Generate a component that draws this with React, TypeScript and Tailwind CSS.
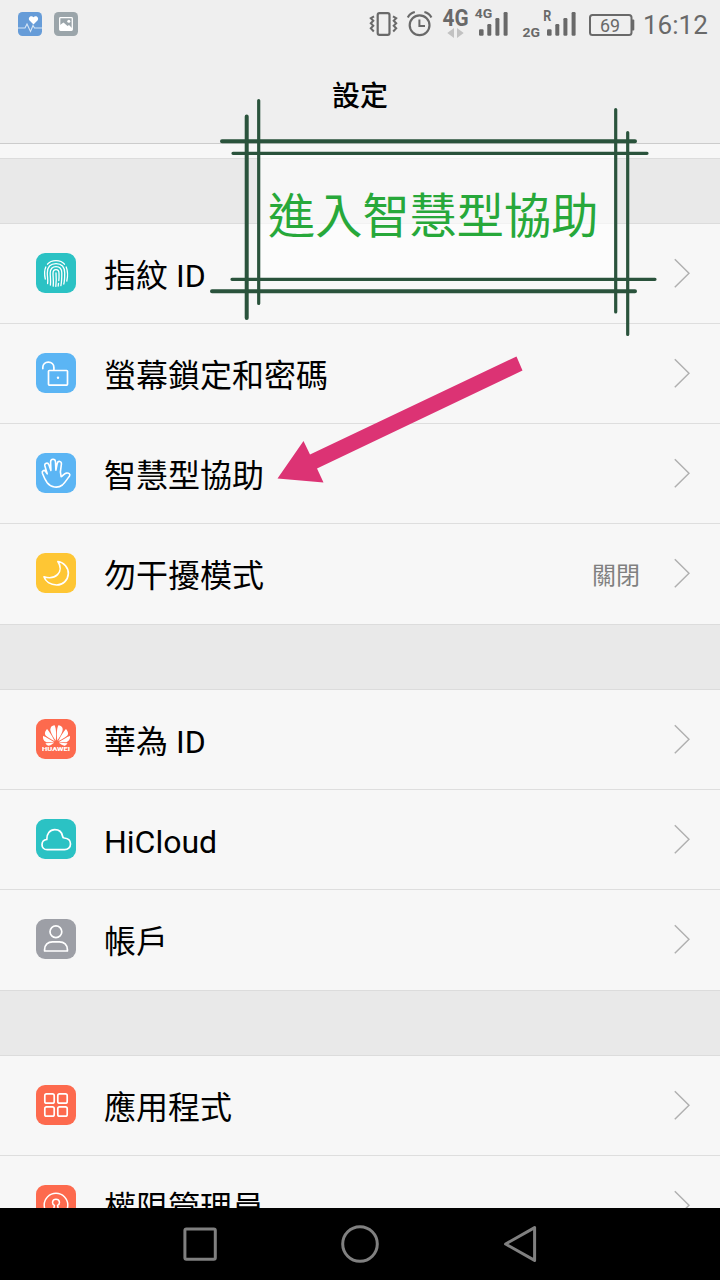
import React from 'react';
import { SiHuawei } from 'react-icons/si';

// --- Row icons (40x40 tiles) ---
const Tile: React.FC<{ className: string; children: React.ReactNode }> = ({ className, children }) => (
  <div className={`relative w-10 h-10 rounded-[9px] shrink-0 overflow-hidden ${className}`}>{children}</div>
);

const Line: React.FC<{ children: React.ReactNode; strokeWidth?: number }> = ({ children, strokeWidth = 1.7 }) => (
  <svg
    width={40}
    height={40}
    viewBox="0 0 40 40"
    fill="none"
    stroke="white"
    strokeWidth={strokeWidth}
    strokeLinecap="round"
    strokeLinejoin="round"
  >
    {children}
  </svg>
);

const FingerprintTile = () => (
  <Tile className="bg-[#2bc2c4]">
    <Line strokeWidth={1.3}>
      <path d="M11.5 11.2C15.2 6.4 24.8 6.4 28.5 11.2" />
      <path d="M9.3 26C8.4 22 8.2 17.5 9.8 14" />
      <path d="M30.2 14C31.8 18 31.7 24 30.8 28" />
      <path d="M11.6 30.5C12.2 27 11.3 24 11.3 20C11.3 13.4 14.8 10.6 20 10.6C25.4 10.6 28.7 14 28.7 20C28.7 25 28.6 28 27.8 31" />
      <path d="M14.4 32C15 28 14.2 24.5 14.2 20C14.2 15.8 16.5 13.6 20 13.6C23.6 13.6 25.8 16 25.8 20C25.8 25 25.7 29 24.9 32.6" />
      <path d="M17.2 33.2C17.8 28.5 17 24.5 17 20.4C17 17.9 18.2 16.6 20 16.6C21.9 16.6 23 17.9 23 20.4C23 23 23.2 25 22.8 27.5" />
      <path d="M20 20C20.3 24 20.5 28.5 19.8 33.4" />
      <path d="M22.5 30.3L22.2 33" />
    </Line>
  </Tile>
);

const LockTile = () => (
  <Tile className="bg-[#5bb5f4]">
    <Line>
      <rect x="12.5" y="17.5" width="19" height="14.6" rx="0.8" />
      <path d="M6.8 15.6V14.5C6.8 11.4 9.2 9.1 12.3 9.1C15.5 9.1 17.9 11.4 17.9 14.5V17.2" />
      <circle cx="22" cy="24.8" r="1.2" fill="white" stroke="none" />
    </Line>
  </Tile>
);

const HandTile = () => (
  <Tile className="bg-[#5bb5f4]">
    <Line strokeWidth={1.6}>
      <path d="M11.2 29.8C9.2 27 7.6 23.4 6.4 20.2C5.6 17.7 8.3 16.5 9.6 18.5L11.2 20.8L8.9 13C8.2 9.9 11.9 9 12.9 11.8L14.9 17.4L14.6 8.9C14.6 5.3 19.3 5.3 19.5 8.8L19.9 17.2L21.3 10.2C22.1 7.3 25.8 8 25.4 11.2L24.4 18.8L25.1 23.6C26.8 23.2 27.8 20.6 30.3 20.1C33 19.7 34.7 21.3 33.4 23.2C31 26 29.3 29.6 26.4 32C22 35.4 14.8 34.6 11.2 29.8Z" />
    </Line>
  </Tile>
);

const MoonTile = () => (
  <Tile className="bg-[#fec634]">
    <Line>
      <path d="M21.9 8.5C28 9.5 32.6 14.6 32.3 20.8C32 27.3 26.8 32.1 20.6 32C14.4 31.9 9.5 28.5 8 23.8C12.8 25.3 18.2 24.9 21.5 21.7C25 18.2 24.7 12.8 21.9 8.5Z" />
    </Line>
  </Tile>
);

const HuaweiTile = () => (
  <Tile className="bg-[#fd6a4e]">
    <div className="flex flex-col items-center pt-[3px] text-white">
      <SiHuawei size={27} />
      <svg width={28} height={6} viewBox="0 0 28 6" className="-mt-[3px]">
        <text x="0" y="5" textLength="28" lengthAdjust="spacingAndGlyphs" className="font-[Roboto] text-[6px] font-black fill-white">
          HUAWEI
        </text>
      </svg>
    </div>
  </Tile>
);

const CloudTile = () => (
  <Tile className="bg-[#2bc2c4]">
    <Line>
      <path d="M11.2 30.7C8 30.7 6 28.5 6 25.7C6 22.7 8 20.8 10.8 20.5C10.4 14.8 13.9 10.6 18.8 10.6C23 10.6 25.8 13.2 26.5 17C26.7 18.3 26.9 18.8 28.3 19C32 19.4 34.5 21.7 34.5 25C34.5 28.4 31.8 30.7 28.6 30.7Z" />
    </Line>
  </Tile>
);

const AccountTile = () => (
  <Tile className="bg-[#9d9fa6]">
    <Line>
      <circle cx="19.9" cy="12.7" r="5.9" />
      <path d="M8.6 32V30.6C8.6 25.8 12 22.8 16.4 22.8H23.4C28 22.8 31.4 25.8 31.4 30.6V32Z" />
    </Line>
  </Tile>
);

const AppsTile = () => (
  <Tile className="bg-[#fd6a4e]">
    <Line>
      <rect x="8.8" y="8.8" width="9.4" height="9.4" rx="1.8" />
      <rect x="21.8" y="8.8" width="9.4" height="9.4" rx="1.8" />
      <rect x="8.8" y="21.8" width="9.4" height="9.4" rx="1.8" />
      <rect x="21.8" y="21.8" width="9.4" height="9.4" rx="1.8" />
    </Line>
  </Tile>
);

const PermissionTile = () => (
  <Tile className="bg-[#fd6a4e]">
    <Line strokeWidth={1.5}>
      <circle cx="20" cy="20" r="11.8" />
      <path d="M18.4 20.4C15.6 19 15.9 14.2 20 14.2C24.1 14.2 24.4 19 21.6 20.4L22.6 26H17.4Z" />
    </Line>
  </Tile>
);

// --- Status bar ---
const StatusBar = () => (
  <div className="h-12 flex items-center justify-between pl-[18px] pr-[11px]">
    <div className="flex gap-3">
      <svg width={24} height={24} viewBox="0 0 24 24" fill="none">
        <rect width="24" height="24" rx="4.5" fill="#669cd8" />
        <path d="M0 16H7L9 12L12.5 19.5L15 13.5L16.5 16H24" stroke="#d6e6f6" strokeWidth="1.1" />
        <path d="M15.5 12.6L11.3 8.2C9.6 5.4 13.3 2.6 15.5 5.2C17.7 2.6 21.4 5.4 19.7 8.2Z" fill="white" />
      </svg>
      <svg width={24} height={24} viewBox="0 0 24 24" fill="none">
        <rect width="24" height="24" rx="4.5" fill="#9ba5aa" />
        <rect x="5.7" y="5.7" width="12.6" height="12.6" rx="0.8" stroke="white" strokeWidth="1.3" />
        <path d="M6 13L9.5 10.5L13.5 14L15 13L18 16V18H6Z" fill="white" />
        <circle cx="14.8" cy="9.2" r="1.5" fill="white" />
      </svg>
    </div>

    <div className="flex items-center text-[#696969]">
      <svg width={270} height={48} viewBox="366 0 270 48" fill="none" stroke="currentColor">
        {/* vibrate */}
        <rect x="377.7" y="13.2" width="11.8" height="21.6" rx="1.8" strokeWidth="2.2" />
        <path d="M374 16.3L370.8 18.2L373.3 20.8L370.8 23.2L373.3 25.7L370.8 28.2L373.8 31.5" strokeWidth="2" />
        <path d="M393 16.3L396.2 18.2L393.7 20.8L396.2 23.2L393.7 25.7L396.2 28.2L393.2 31.5" strokeWidth="2" />
        {/* alarm */}
        <circle cx="419.6" cy="25.3" r="9.9" strokeWidth="2.2" />
        <path d="M419.4 19.5V26H425" strokeWidth="2" />
        <path d="M407.8 17.4C409.2 14.8 411.8 12.7 414.8 12M424.4 12C427.4 12.7 430 14.8 431.4 17.4" strokeWidth="2.2" />
        {/* data arrows */}
        <path d="M447.3 33L454 28V38ZM463.7 33L457 28V38Z" fill="#c2c2c2" stroke="none" />
        {/* signal bars */}
        <g fill="currentColor" stroke="none">
          <rect x="479" y="29.3" width="4.6" height="6.5" rx="1.2" />
          <rect x="487.3" y="24" width="4" height="11.8" rx="1.2" />
          <rect x="495.4" y="18" width="4" height="17.8" rx="1.2" />
          <rect x="503.6" y="12" width="4" height="23.8" rx="1.2" />
          <rect x="547" y="29.3" width="4.6" height="6.5" rx="1.2" />
          <rect x="555.3" y="24" width="4" height="11.8" rx="1.2" />
          <rect x="563.4" y="18" width="4" height="17.8" rx="1.2" />
          <rect x="571.6" y="12" width="4" height="23.8" rx="1.2" />
        </g>
        {/* battery */}
        <rect x="590" y="15" width="41.5" height="20" rx="2.5" strokeWidth="2" />
        <rect x="631.5" y="19.5" width="2.8" height="11" rx="1" fill="currentColor" stroke="none" />
        <g fill="currentColor" stroke="none" className="font-[Roboto] font-bold">
          <text x="442.5" y="26" fontSize="24" textLength="26" lengthAdjust="spacingAndGlyphs">4G</text>
          <text x="474.8" y="18" fontSize="13.5" textLength="17.5" lengthAdjust="spacingAndGlyphs">4G</text>
          <text x="522.6" y="36.5" fontSize="13.5" textLength="17.5" lengthAdjust="spacingAndGlyphs">2G</text>
          <text x="543.3" y="20.5" fontSize="15" textLength="8" lengthAdjust="spacingAndGlyphs">R</text>
          <text x="600" y="31.6" fontSize="18.5" textLength="20" lengthAdjust="spacingAndGlyphs" className="font-normal">69</text>
        </g>
      </svg>
      <span className="w-[66px] ml-[7px] text-[26px] leading-none whitespace-nowrap mt-0.5">16:12</span>
    </div>
  </div>
);

// --- List pieces ---
const Row: React.FC<{ icon: React.ReactNode; label: string; value?: string; last?: boolean }> = ({ icon, label, value, last }) => (
  <div className={`h-[100px] shrink-0 flex items-center pl-9 pr-[30px] pb-px border-b ${last ? 'border-transparent' : 'border-[#dedede]'}`}>
    {icon}
    <span className="ml-7 flex-1 pt-[5px] text-[32px] leading-10 text-black whitespace-nowrap">{label}</span>
    {value && <span className="mr-[34px] mt-[5px] text-2xl text-[#808080]">{value}</span>}
    <svg width={16} height={30} viewBox="0 0 16 30" fill="none" stroke="#b0b0b0" strokeWidth={1.5}>
      <path d="M0.8 1.3L15 15.3L0.8 29.3" />
    </svg>
  </div>
);

const Gap = () => <div className="h-[66px] shrink-0 bg-[#e9e9e9] border-y border-[#dcdcdc]" />;

// --- Annotation: crossed-line frame and arrow over the list ---
const Annotation = () => (
  <svg className="absolute inset-0 pointer-events-none" width={720} height={1280} viewBox="0 0 720 1280" fill="none">
    <rect x="260" y="155" width="355" height="123" fill="white" fillOpacity="0.62" />
    <g stroke="#2a533c" strokeLinecap="round">
      <path d="M246.7 116.5V318M222 141.3H635M212 291.3H635" strokeWidth="4" />
      <path d="M258.7 100.5V303.5M615.7 109.5V312M627.7 132.5V334.5M233 153.3H647M232 279.3H655" strokeWidth="3.2" />
    </g>
    <text x="268" y="233" fontSize="47.2" fill="#27a83a">進入智慧型協助</text>
    <path d="M277.5 478.5L303.5 441L310 454.5L516.5 356.5L522.5 370.5L317 468.5L323.5 482.5Z" fill="#dc3374" />
  </svg>
);

const NavBar = () => (
  <div className="h-[72px] shrink-0 bg-black flex items-center justify-between px-[180px]">
    <svg width={40} height={40} viewBox="0 0 40 40" fill="none" stroke="#808080" strokeWidth={3}>
      <rect x="4.9" y="4.9" width="30.4" height="30.4" rx="1.5" />
    </svg>
    <svg width={40} height={40} viewBox="0 0 40 40" fill="none" stroke="#808080" strokeWidth={3}>
      <circle cx="20" cy="20" r="17.3" />
    </svg>
    <svg width={40} height={40} viewBox="0 0 40 40" fill="none" stroke="#808080" strokeWidth={3} strokeLinejoin="round">
      <path d="M5.6 20L34.6 3.6V36.4Z" />
    </svg>
  </div>
);

export default function App() {
  return (
    <div className="relative w-[720px] h-[1280px] overflow-hidden flex flex-col bg-[#f7f7f7] font-[Roboto,'Noto_Sans_CJK_TC',sans-serif]">
      <header className="h-36 shrink-0 bg-[#efefef] border-b border-[#cccccc]">
        <StatusBar />
        <h1 className="h-[95px] pt-0.5 flex items-center justify-center text-[28px] font-medium text-black">設定</h1>
      </header>

      <main className="flex-1 min-h-0 overflow-hidden flex flex-col pt-3.5">
        <Gap />
        <Row icon={<FingerprintTile />} label="指紋 ID" />
        <Row icon={<LockTile />} label="螢幕鎖定和密碼" />
        <Row icon={<HandTile />} label="智慧型協助" />
        <Row icon={<MoonTile />} label="勿干擾模式" value="關閉" last />
        <Gap />
        <Row icon={<HuaweiTile />} label="華為 ID" />
        <Row icon={<CloudTile />} label="HiCloud" />
        <Row icon={<AccountTile />} label="帳戶" last />
        <Gap />
        <Row icon={<AppsTile />} label="應用程式" />
        <Row icon={<PermissionTile />} label="權限管理員" />
      </main>

      <NavBar />
      <Annotation />
    </div>
  );
}
